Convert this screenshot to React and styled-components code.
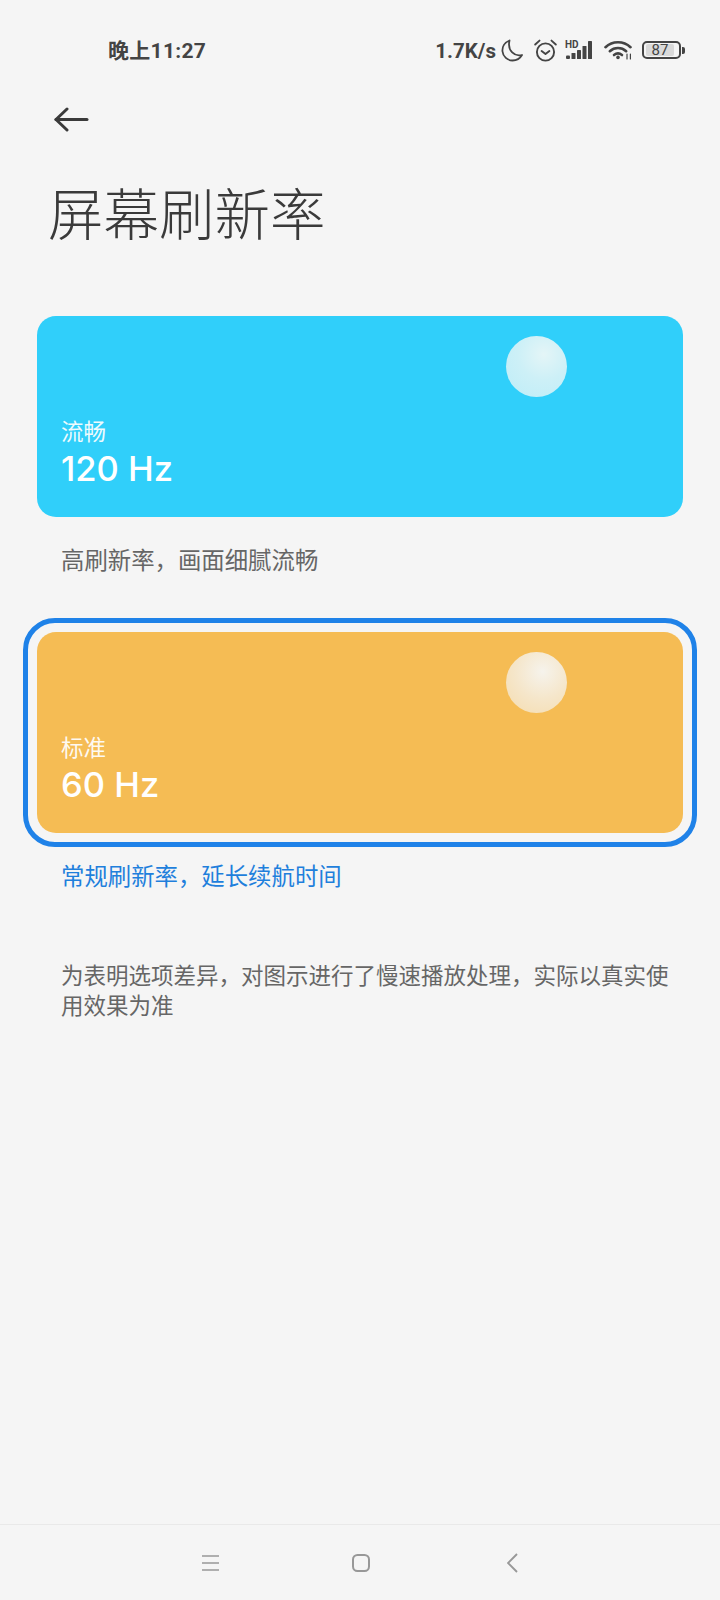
import React from 'react';
import styled, {createGlobalStyle} from 'styled-components';

const cjk = '"Noto Sans CJK SC", "Noto Sans", sans-serif';

const GlobalStyle = createGlobalStyle`
    html, body {
        margin: 0;
        padding: 0;
        background: #f5f5f5;
    }
    * {
        box-sizing: border-box;
    }
`;
const Screen = styled.div`
    display: flex;
    flex-direction: column;
    width: 720px;
    height: 1600px;
    background: #f5f5f5;
    font-family: ${cjk};
    overflow: hidden;
`;
const StatusBar = styled.div`
    display: flex;
    align-items: center;
    justify-content: space-between;
    height: 100px;
    padding: 0 35px 0 108px;
    color: #444;
`;
const Clock = styled.span`
    margin-bottom: 2px;
    font-family: "Roboto", ${cjk};
    font-size: 21px;
    font-weight: 700;
    letter-spacing: 0.3px;
`;
const StatusIcons = styled.div`
    display: flex;
    align-items: center;
`;
const Speed = styled.span`
    margin: 2px 5px 0 0;
    font-family: "Roboto", sans-serif;
    font-size: 20.5px;
    font-weight: 700;
`;
const StatusIcon = styled.svg`
    display: block;
    margin-right: ${props => props.$gap || 0}px;
    flex: none;
`;
const Battery = styled.div`
    display: flex;
    align-items: center;
    gap: 1px;
`;
const BatteryBody = styled.div`
    display: flex;
    width: 39px;
    height: 18px;
    padding: 1px 2px;
    border: 2px solid #444;
    border-radius: 5px;
`;
const BatteryLevel = styled.div`
    display: flex;
    align-items: center;
    justify-content: center;
    width: 90%;
    background: #d9d9d9;
    border-radius: 2px;
    font-family: "Roboto", sans-serif;
    font-size: 15px;
    line-height: 12px;
    color: #444;
`;
const BatteryNub = styled.div`
    width: 3px;
    height: 7px;
    background: #444;
    border-radius: 0 2px 2px 0;
`;
const BackRow = styled.div`
    display: flex;
    align-items: center;
    height: 38px;
    padding-left: 54px;
`;
const Title = styled.h1`
    margin: 43px 0 3px 48px;
    font-size: 55.5px;
    font-weight: 300;
    line-height: 60px;
    color: #3a3a3a;
`;
const Options = styled.div`
    display: flex;
    flex-direction: column;
    margin-top: 58px;
`;
const Option = styled.div`
    margin: 0 23px;
    padding: 9px;
    border: 5px solid ${props => props.$selected ? '#1f82e8' : 'transparent'};
    border-radius: 32px;
`;
const Card = styled.div`
    position: relative;
    display: flex;
    flex-direction: column;
    justify-content: flex-end;
    height: 201px;
    padding: 0 24px 27px;
    border-radius: 19px;
    background: ${props => props.$color};
    color: #fff;
`;
const Ball = styled.div`
    position: absolute;
    top: 20px;
    left: 469px;
    width: 61px;
    height: 61px;
    border-radius: 50%;
    background: ${props => props.$glow};
`;
const CardLabel = styled.div`
    font-size: 22.5px;
    line-height: 30px;
    opacity: 0.92;
`;
const CardRate = styled.div`
    margin-top: 3px;
    font-family: "Inter", sans-serif;
    font-size: 34.5px;
    font-weight: 500;
    line-height: 42px;
`;
const Description = styled.p`
    margin: 13px 0 ${props => props.$last ? 0 : 44}px 61px;
    font-size: 23.4px;
    line-height: 30px;
    color: ${props => props.$selected ? '#1f7fdc' : '#666'};
`;
const Note = styled.p`
    width: 612px;
    margin: 69px 0 0 61px;
    font-size: 22.5px;
    line-height: 30px;
    color: #666;
`;
const NavBar = styled.div`
    display: flex;
    align-items: center;
    height: 76px;
    margin-top: auto;
    padding-left: 202px;
    border-top: 1px solid #e9e9e9;
`;
const NavIcon = styled.svg`
    display: block;
    margin-right: ${props => props.$gap || 0}px;
    color: #989898;
`;

const options = [
    {
        label: '流畅',
        rate: '120 Hz',
        description: '高刷新率，画面细腻流畅',
        color: '#30cffa',
        glow: 'radial-gradient(circle at 62% 30%, #e4f5f7 0%, #cdf0f7 45%, #bdedf8 100%)',
    },
    {
        label: '标准',
        rate: '60 Hz',
        description: '常规刷新率，延长续航时间',
        color: '#f5bc54',
        glow: 'radial-gradient(circle at 60% 32%, #f6f3ec 0%, #f5e6ca 50%, #f5dcad 100%)',
        selected: true,
    },
];

function StatusGroup() {
    return <StatusIcons>
        <Speed>1.7K/s</Speed>
        <StatusIcon $gap={11} width="22" height="23" viewBox="0 0 22 23" fill="none" stroke="#444" strokeWidth="1.8" strokeLinejoin="round">
            <path d="M8.5 1.5C3.5 3.5 1 8 1.5 12.5C2 17.5 6.5 21.5 11.5 21.5C15.5 21.5 19 19.5 21 16C14 18 6 12 8.5 1.5Z"/>
        </StatusIcon>
        <StatusIcon $gap={8} width="23" height="23" viewBox="0 0 23 23" fill="none" stroke="#444" strokeWidth="1.9" strokeLinecap="round" strokeLinejoin="round">
            <circle cx="11.5" cy="13" r="8.6"/>
            <path d="M7.6 12l3.9 3 3.9-3"/>
            <path d="M1.2 5.5L5.5 1.6M21.8 5.5L17.5 1.6"/>
        </StatusIcon>
        <StatusIcon $gap={11} width="28" height="20" viewBox="0 0 28 20" fill="#444">
            <text x="0" y="8" fontFamily="Roboto, sans-serif" fontSize="10" fontWeight="700">HD</text>
            <rect x="1" y="15.5" width="4" height="3.5" rx="1"/>
            <rect x="6.5" y="13" width="4" height="6" rx="0.6"/>
            <rect x="12" y="10" width="4" height="9" rx="0.6"/>
            <rect x="17.5" y="6" width="4" height="13" rx="0.6"/>
            <rect x="23" y="1" width="4" height="18" rx="0.6"/>
        </StatusIcon>
        <StatusIcon $gap={9} width="29" height="20" viewBox="0 0 29 20" fill="none" stroke="#444" strokeWidth="2.6" strokeLinecap="round">
            <path d="M1.5 7.2C8.5 .6 19.5 .6 26.5 7.2"/>
            <path d="M5.8 11.2C10.5 7 17.5 7 22.2 11.2"/>
            <path d="M10 15C12.5 13 15.5 13 18 15"/>
            <circle cx="14" cy="17.4" r="1.8" fill="#444" stroke="none"/>
            <path d="M23 14v5M26.4 14v5" strokeWidth="1.2"/>
        </StatusIcon>
        <Battery>
            <BatteryBody>
                <BatteryLevel>87</BatteryLevel>
            </BatteryBody>
            <BatteryNub/>
        </Battery>
    </StatusIcons>
}

export default function App() {
    return <Screen>
        <GlobalStyle/>
        <StatusBar>
            <Clock>晚上11:27</Clock>
            <StatusGroup/>
        </StatusBar>
        <BackRow>
            <svg width="35" height="25" viewBox="0 0 35 25" fill="none" stroke="#3a3a3a" strokeWidth="3" strokeLinecap="round" strokeLinejoin="round">
                <path d="M2 12.5H33"/>
                <path d="M13 2L2 12.5L13 23"/>
            </svg>
        </BackRow>
        <Title>屏幕刷新率</Title>
        <Options>
            {options.map((option, i) => <React.Fragment key={option.rate}>
                <Option $selected={option.selected}>
                    <Card $color={option.color}>
                        <Ball $glow={option.glow}/>
                        <CardLabel>{option.label}</CardLabel>
                        <CardRate>{option.rate}</CardRate>
                    </Card>
                </Option>
                <Description $selected={option.selected} $last={i === options.length - 1}>{option.description}</Description>
            </React.Fragment>)}
        </Options>
        <Note>为表明选项差异，对图示进行了慢速播放处理，实际以真实使用效果为准</Note>
        <NavBar>
            <NavIcon $gap={132} width="18" height="18" viewBox="0 0 18 18" fill="none" stroke="currentColor" strokeWidth="1.5">
                <path d="M0 2H17M0 9H17M0 16H17"/>
            </NavIcon>
            <NavIcon $gap={137} width="18" height="18" viewBox="0 0 18 18" fill="none" stroke="currentColor" strokeWidth="2">
                <rect x="1" y="1" width="16" height="16" rx="4.5"/>
            </NavIcon>
            <NavIcon width="11" height="20" viewBox="0 0 11 20" fill="none" stroke="currentColor" strokeWidth="1.9">
                <path d="M10 1L1 10L10 19"/>
            </NavIcon>
        </NavBar>
    </Screen>
}
